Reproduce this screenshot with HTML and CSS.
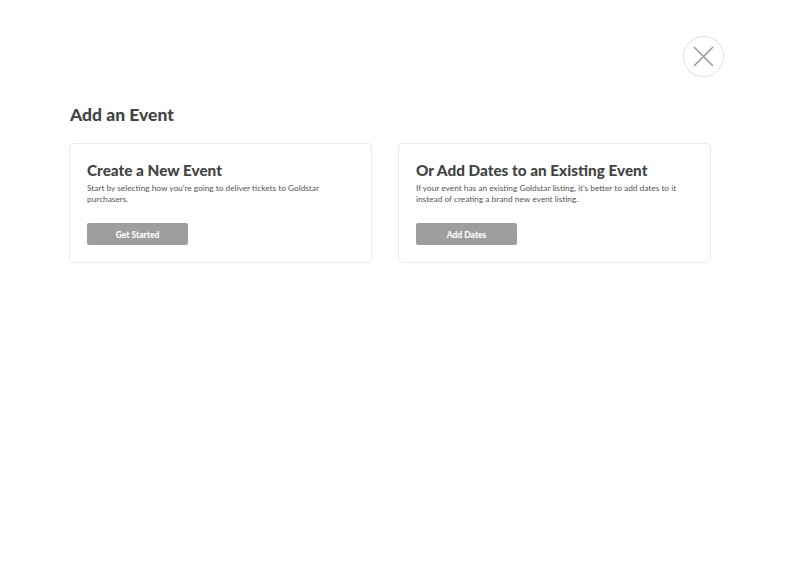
FILE: index.html
```html
<!DOCTYPE html>
<html lang="en">
<head>
<meta charset="utf-8">
<title>Add an Event</title>
<link rel="stylesheet" href="styles.css">
</head>
<body>
<div class="page">
  <div class="topbar">
    <button class="close" aria-label="Close">
      <svg width="21" height="21" viewBox="0 0 21 21"><path d="M1 1 L20 20 M20 1 L1 20" stroke="#9a9a9a" stroke-width="1.6" fill="none"/></svg>
    </button>
  </div>
  <h1 class="title">Add an Event</h1>
  <div class="cards">
    <div class="card">
      <h2 class="card-title">Create a New Event</h2>
      <p class="card-text">Start by selecting how you're going to deliver tickets to Goldstar purchasers.</p>
      <button class="btn">Get Started</button>
    </div>
    <div class="card">
      <h2 class="card-title">Or Add Dates to an Existing Event</h2>
      <p class="card-text">If your event has an existing Goldstar listing, it's better to add dates to it instead of creating a brand new event listing.</p>
      <button class="btn">Add Dates</button>
    </div>
  </div>
</div>
</body>
</html>
```
FILE: styles.css
```css
* { box-sizing: border-box; }
html, body { margin: 0; padding: 0; background: #fff; }
body { font-family: Lato, "Open Sans", sans-serif; color: #444; }
.page { padding: 36px 67px 0 69px; }
.topbar { display: flex; justify-content: flex-end; height: 41px; }
.close {
  width: 41px; height: 41px; border-radius: 50%;
  border: 1px solid #e3e3e3; background: #fff;
  box-shadow: 0 0 2px rgba(0,0,0,0.06);
  display: flex; align-items: center; justify-content: center;
  padding: 0; cursor: pointer;
}
.title {
  margin: 27px 0 0 1px; font-size: 17.5px; line-height: 22px; font-weight: 900; color: #444;
}
.cards {
  display: grid; grid-template-columns: 303px 313px; gap: 26px; margin-top: 17px;
}
.card {
  border: 1px solid #ebebeb; border-radius: 4px; padding: 17px 17px 17px 17px;
  background: #fff;
}
.card-title { margin: 0; font-size: 15.3px; line-height: 18px; font-weight: 900; color: #444; }
.card-text { margin: 4px 0 0 0; font-size: 8.3px; line-height: 11px; color: #555; max-width: 240px; }
.card:nth-child(2) .card-text { max-width: 270px; }
.btn {
  display: block; margin-top: 18px; width: 101px; height: 22px; border: none; border-radius: 2px;
  background: #9e9e9e; color: #fff; font-family: Lato, sans-serif; font-weight: 900; font-size: 8.5px;
  padding: 1px 0 0 0;
}
```
